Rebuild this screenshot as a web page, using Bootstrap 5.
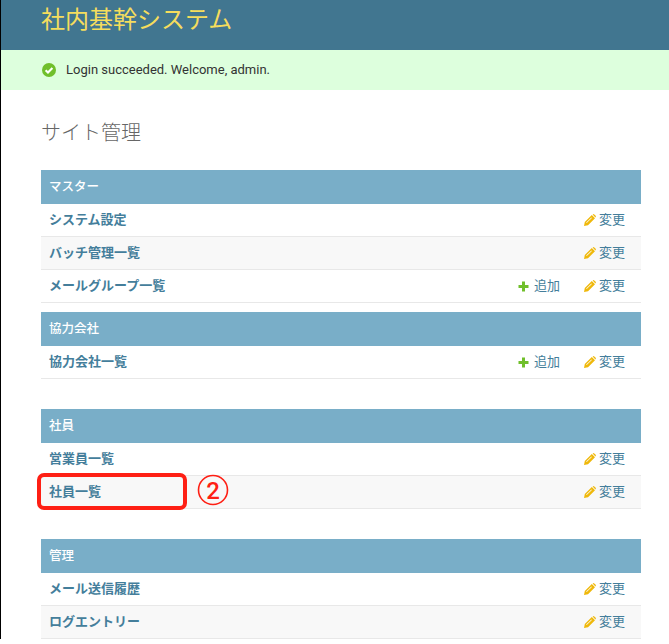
<!DOCTYPE html>
<html lang="ja">
<head>
  <meta charset="UTF-8">
  <title>サイト管理</title>
  <link href="https://cdn.jsdelivr.net/npm/bootstrap@5.3.0/dist/css/bootstrap.min.css" rel="stylesheet">
  <style>
    html, body { overflow: hidden; }
    body { font-family: Roboto, "Noto Sans CJK JP", sans-serif; font-size: 13px; color: #333; position: relative; border-left: 1px solid #000; }
    a { color: #447e9b; text-decoration: none; }
    .site-head { height: 50px; background: #417690; padding-left: 40px; }
    .site-head a { color: #f5dd5d; font-size: 24px; line-height: 41px; }
    .msg-ok { height: 40px; background: #dfd; padding-left: 41px; gap: 10px; color: #333; }
    .page-body { padding: 30px 28px 0 40px; }
    .page-title { font-size: 20px; font-weight: 300; color: #666; line-height: 26px; margin: 0 0 24px; }
    .mod-head { height: 34px; background: #79aec8; color: #fff; padding-left: 8px; font-size: 12.5px; font-weight: 500; }
    .mod-row { height: 33px; border-bottom: 1px solid #e8e8e8; padding: 0 16px 0 8px; }
    .mod-row:nth-child(even) { background: #f8f8f8; }
    .mod-row .mod-name { font-weight: 700; flex-grow: 1; }
    .mod-link { display: flex; align-items: center; gap: 3px; }
    .add-link { margin-right: 24px; gap: 5px; }
    .gap-first { margin-bottom: 9px; }
    .gap-next { margin-bottom: 30px; }
    .note-box { position: absolute; left: 36px; top: 473px; width: 150px; height: 37px; border: 4px solid #fe1f14; border-radius: 7px; }
    .note-num { position: absolute; left: 196px; top: 474px; }
    .note-num text { font-family: Roboto, sans-serif; font-size: 24px; font-weight: 500; fill: #fe1f14; }
  </style>
</head>
<body>

<svg width="0" height="0" class="d-none">
  <symbol id="ic-pencil" viewBox="0 0 12 12">
    <path fill="#efb80b" d="M0 12 L0.8 8 L7.8 1 L11 4.2 L4 11.2 Z M8.6 0.6 L9.2 0.2 Q9.8 -0.1 10.3 0.4 L11.7 1.8 Q12.1 2.3 11.8 2.8 L11.4 3.4 Z"/>
    <path fill="#fff" d="M2.2 8.6 L7.4 3.4 L7.9 3.9 L2.7 9.1 Z"/>
  </symbol>
  <symbol id="ic-plus" viewBox="0 0 11 11">
    <path fill="#70bf2b" d="M4 0.5 H7 V4 H10.5 V7 H7 V10.5 H4 V7 H0.5 V4 H4 Z"/>
  </symbol>
</svg>

<header class="site-head">
  <a href="#">社内基幹システム</a>
</header>

<div class="msg-ok d-flex align-items-center">
  <svg width="14" height="14" viewBox="0 0 14 14">
    <circle cx="7" cy="7" r="7" fill="#70bf2b"/>
    <path d="M3.6 7.2 L6 9.6 L10.4 5.1" fill="none" stroke="#fff" stroke-width="2.1"/>
  </svg>
  <span>Login succeeded. Welcome, admin.</span>
</div>

<main class="page-body">
  <h1 class="page-title">サイト管理</h1>

  <section class="gap-first">
    <div class="mod-head d-flex align-items-center">マスター</div>
    <div>
      <div class="mod-row d-flex align-items-center">
        <a class="mod-name" href="#">システム設定</a>
        <a class="mod-link" href="#"><svg width="12" height="12"><use href="#ic-pencil"/></svg>変更</a>
      </div>
      <div class="mod-row d-flex align-items-center">
        <a class="mod-name" href="#">バッチ管理一覧</a>
        <a class="mod-link" href="#"><svg width="12" height="12"><use href="#ic-pencil"/></svg>変更</a>
      </div>
      <div class="mod-row d-flex align-items-center">
        <a class="mod-name" href="#">メールグループ一覧</a>
        <a class="mod-link add-link" href="#"><svg width="11" height="11"><use href="#ic-plus"/></svg>追加</a>
        <a class="mod-link" href="#"><svg width="12" height="12"><use href="#ic-pencil"/></svg>変更</a>
      </div>
    </div>
  </section>

  <section class="gap-next">
    <div class="mod-head d-flex align-items-center">協力会社</div>
    <div>
      <div class="mod-row d-flex align-items-center">
        <a class="mod-name" href="#">協力会社一覧</a>
        <a class="mod-link add-link" href="#"><svg width="11" height="11"><use href="#ic-plus"/></svg>追加</a>
        <a class="mod-link" href="#"><svg width="12" height="12"><use href="#ic-pencil"/></svg>変更</a>
      </div>
    </div>
  </section>

  <section class="gap-next">
    <div class="mod-head d-flex align-items-center">社員</div>
    <div>
      <div class="mod-row d-flex align-items-center">
        <a class="mod-name" href="#">営業員一覧</a>
        <a class="mod-link" href="#"><svg width="12" height="12"><use href="#ic-pencil"/></svg>変更</a>
      </div>
      <div class="mod-row d-flex align-items-center">
        <a class="mod-name" href="#">社員一覧</a>
        <a class="mod-link" href="#"><svg width="12" height="12"><use href="#ic-pencil"/></svg>変更</a>
      </div>
    </div>
  </section>

  <section>
    <div class="mod-head d-flex align-items-center">管理</div>
    <div>
      <div class="mod-row d-flex align-items-center">
        <a class="mod-name" href="#">メール送信履歴</a>
        <a class="mod-link" href="#"><svg width="12" height="12"><use href="#ic-pencil"/></svg>変更</a>
      </div>
      <div class="mod-row d-flex align-items-center">
        <a class="mod-name" href="#">ログエントリー</a>
        <a class="mod-link" href="#"><svg width="12" height="12"><use href="#ic-pencil"/></svg>変更</a>
      </div>
    </div>
  </section>
</main>

<div class="note-box"></div>
<svg class="note-num" width="34" height="34" viewBox="0 0 34 34">
  <circle cx="16" cy="16" r="14.5" fill="none" stroke="#fe1f14" stroke-width="1.6"/>
  <text x="16" y="24.5" text-anchor="middle">2</text>
</svg>

<script src="https://cdn.jsdelivr.net/npm/bootstrap@5.3.0/dist/js/bootstrap.bundle.min.js"></script>
</body>
</html>
